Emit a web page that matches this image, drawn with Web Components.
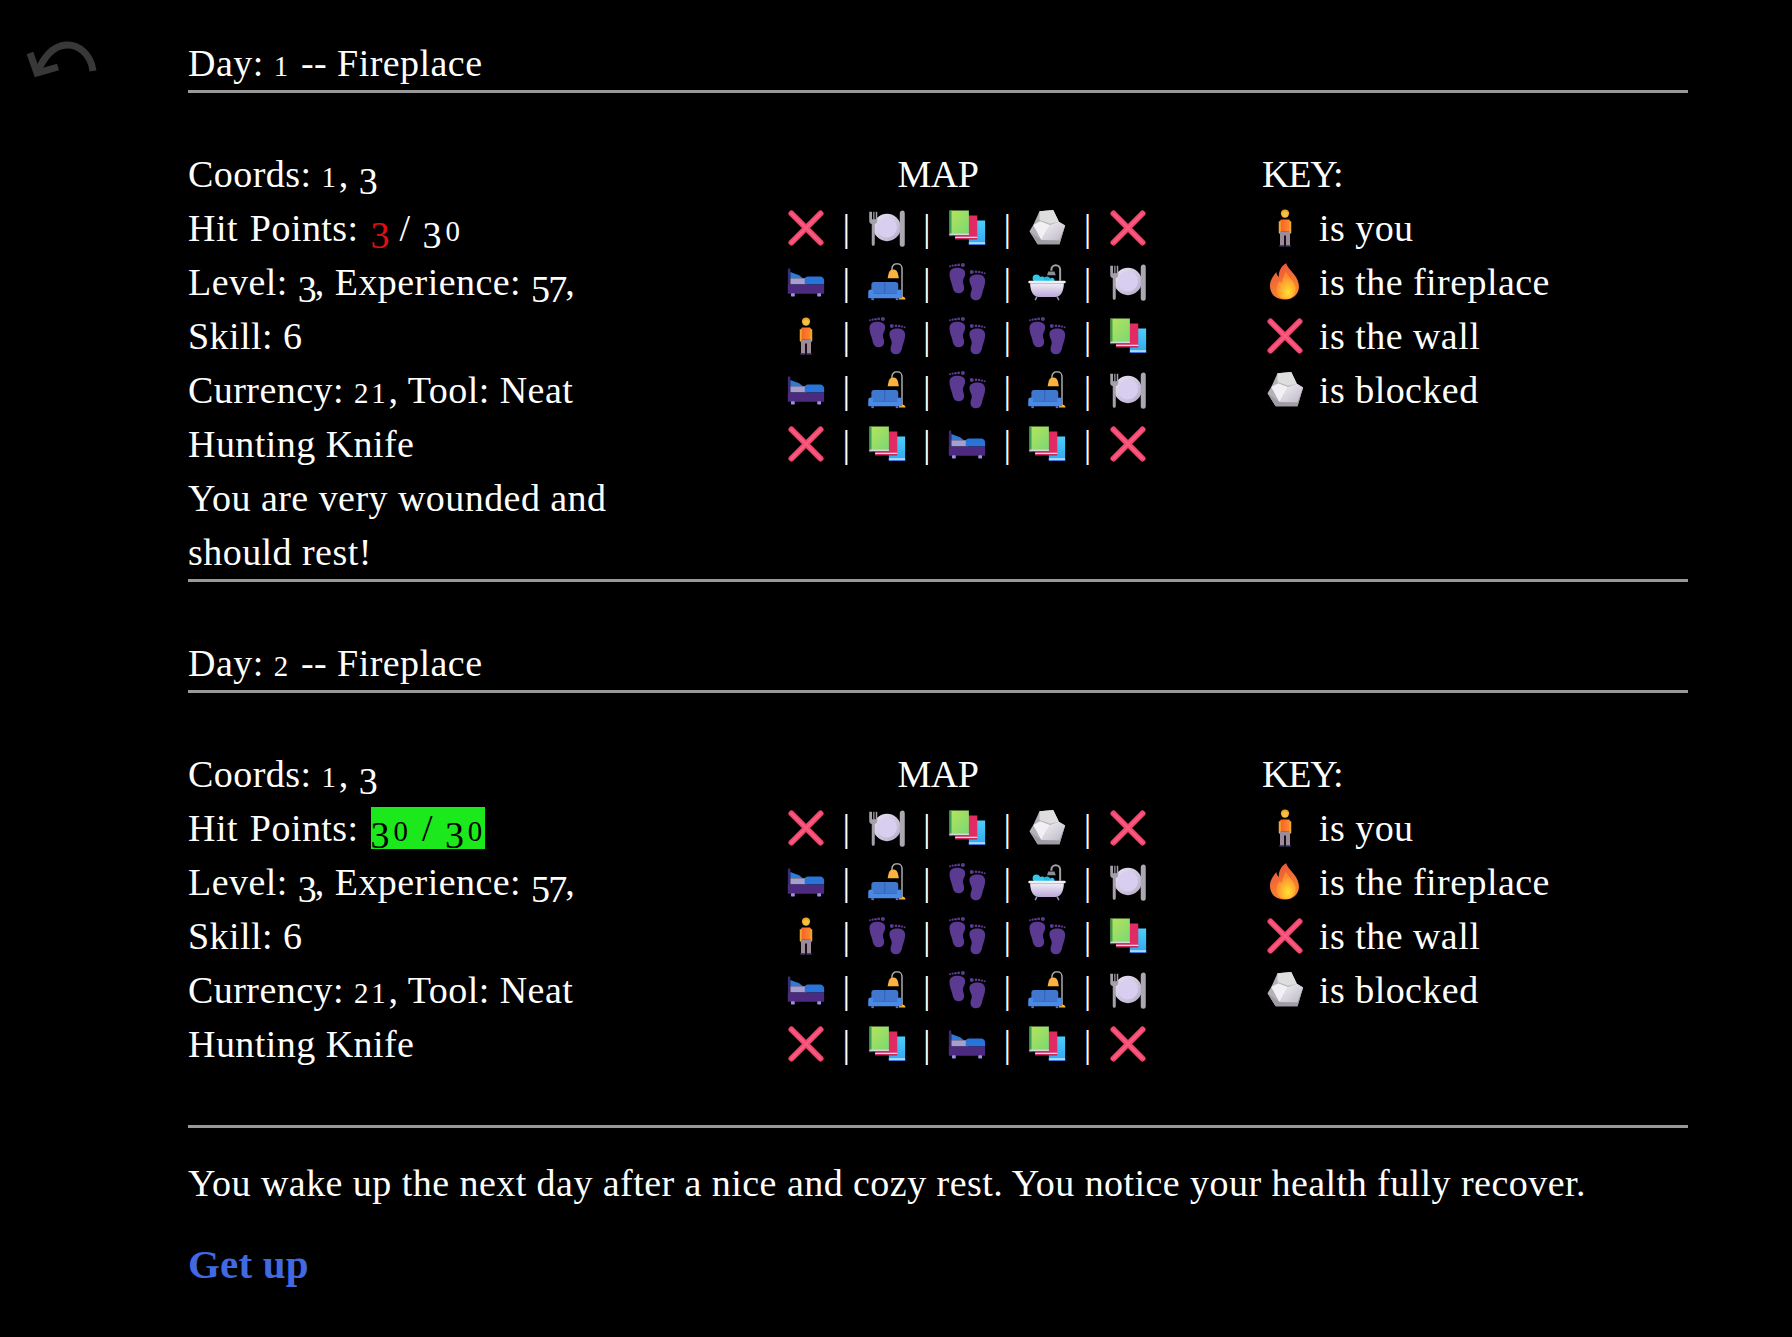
<!DOCTYPE html>
<html><head><meta charset="utf-8"><title>Day</title>
<style>
html,body{margin:0;background:#000;color:#fff;font-family:"Liberation Serif",serif}
</style></head><body>
<game-page></game-page>
<script>
const foot=`<path d="M2 9.500c0-3.500 2.700-5 6.500-5s6.500 1.700 6 5.300c-.3 2.500-2 4-1.800 6.200.1 1.500 1 2.800 1 4.800 0 2.700-2 4.200-4.500 4.200-3.200 0-4.500-2.700-5-6.200C3.300 15.800 2 13 2 9.500z"/><circle cx="2.400" cy="3.400" r=".8"/><circle cx="4.500" cy="2.900" r=".9"/><circle cx="6.800" cy="2.500" r="1"/><circle cx="9.300" cy="2.300" r="1.100"/><circle cx="12.700" cy="2.400" r="1.600"/>`;
const G={
x:`<path d="M4.400 4.400L27.600 27.600M27.600 4.400L4.400 27.600" stroke="#f4476f" stroke-width="4.800" stroke-linecap="round"/><path d="M4.400 4.400L27.600 27.600M27.600 4.400L4.400 27.600" stroke="#ff6a8c" stroke-width="1.600" stroke-linecap="round" opacity=".6"/>`,
plate:`<defs><linearGradient id="p" x1="0" y1="0" x2="1" y2="1"><stop offset="0" stop-color="#ebe5f6"/><stop offset="1" stop-color="#b5aac8"/></linearGradient></defs><circle cx="16" cy="15.500" r="11" fill="url(#p)"/><circle cx="16" cy="15.500" r="8" fill="#d8cef0"/><path d="M1.800 3v7.500c0 1.200.9 2 2 2.300V29a1.200 1.200 0 002.400 0V12.800c1.100-.3 2-1.100 2-2.300V3H7v6H6V3H5v6H4V3z" fill="#a5a1aa"/><path d="M26.200 29V4.500C26.200 3 27.200 2 28.400 2s1.800 1 1.800 2.500V29a2 2 0 01-4 0z" fill="#aca8b2"/>`,
books:`<defs><linearGradient id="g" x1="0" y1="0" x2="1" y2="1"><stop offset="0" stop-color="#b8e45c"/><stop offset="1" stop-color="#78d874"/></linearGradient><linearGradient id="b" x1="0" y1="0" x2="0" y2="1"><stop offset="0" stop-color="#4dcffa"/><stop offset="1" stop-color="#31a7f0"/></linearGradient></defs><path d="M20 10h10.500v19.500H17.500V25z" fill="url(#b)"/><rect x="17.500" y="27.500" width="13" height="1.200" fill="#d7ecfb"/><rect x="17.500" y="28.700" width="13" height=".9" fill="#3a78d6"/><path d="M6.500 6h17.700v19H6.500z" fill="#e32b63"/><rect x="6.500" y="23" width="17.700" height="1.200" fill="#e9dbe5"/><rect x="6.500" y="24.200" width="17.700" height=".9" fill="#b0244f"/><path d="M2 2h15.500v19.500H2z" fill="url(#g)"/><rect x="2" y="2" width="1.600" height="20.500" fill="#3e9a52"/><rect x="2" y="20.500" width="15.500" height="1.200" fill="#d8d9dc"/><rect x="2" y="21.700" width="15.500" height=".8" fill="#5a6a60"/>`,
rock:`<defs><linearGradient id="r" x1="0" y1="0" x2="1" y2="1"><stop offset="0" stop-color="#f6f4f8"/><stop offset="1" stop-color="#bcb6c4"/></linearGradient></defs><path d="M10 2.500l11-1 4.500 9.500 5 3L26 29H8.500L2 18.500l3-5z" fill="#b4b2b8"/><path d="M10 2.500l11-1 4.500 9.500-7 1.500-8.500-3z" fill="#dededf"/><path d="M5 13.500l5.500-3 8 3-7 12z" fill="#f2f0f5"/><path d="M18.500 13.500l7-2.500 5 3L26 26H11.500z" fill="url(#r)"/><path d="M2 18.500l9.500 7L26 26l4.500-12L26 29H8.500z" fill="#a09ca6"/>`,
bed:`<path d="M1.500 6.500c0-.8.4-1.500 1-1.500s1 .7 1 1.500V24h-2z" fill="#3b2a75"/><path d="M3.500 8l7 2.500 3 2.500h-10z" fill="#2e7bd6"/><rect x="3.500" y="13" width="13" height="5" fill="#a5a0d0"/><path d="M15 16v-2c0-1.500 1-2.500 2.500-2.500H27c2.300 0 3.500 1.300 3.500 3.500V18H15z" fill="#2874d9"/><path d="M1.500 18h29v7.300h-29z" fill="#4b2a7f"/><rect x="4" y="25" width="3" height="2.500" rx=".5" fill="#a08fe6"/><rect x="25" y="25" width="3" height="2.500" rx=".5" fill="#a08fe6"/>`,
sofa:`<path d="M28 28.500V5a3.500 3.500 0 00-3.500-3.500h-1A3.500 3.500 0 0020 5v1.500" fill="none" stroke="#b9b9bd" stroke-width="1.100"/><path d="M21 6c-2.200 0-3.500 1.500-3.800 3.500l-.7 3.500h9l-.7-3.500C24.500 7.500 23.200 6 21 6z" fill="#fcb23c"/><path d="M25.500 30c0-1.500 1-2.500 2.500-2.500s2.800 1 2.800 2.500z" fill="#f9b530"/><path d="M3.500 18c0-1.100.9-2 2-2H23c1.100 0 2 .9 2 2v7H3.500z" fill="#3f78ce"/><path d="M14.200 16v9" stroke="#2e5dad" stroke-width=".7"/><path d="M1 24a2 2 0 014 0v1h19v-1a2 2 0 014 0v5H1z" fill="#4a8ae6"/><rect x="3.500" y="29" width="2" height="1.500" fill="#6a70d0"/><rect x="23" y="29" width="2" height="1.500" fill="#6a70d0"/>`,
feet:`<g fill="#5b3a91">${foot}<g transform="translate(32.500 5.500) scale(-1 1)">${foot}</g></g>`,
bath:`<defs><linearGradient id="t" x1="0" y1="0" x2="0" y2="1"><stop offset="0" stop-color="#f2eef8"/><stop offset="1" stop-color="#b9a8d6"/></linearGradient></defs><path d="M26.500 15V6a3.500 3.500 0 00-7 0v1" fill="none" stroke="#a0a0a4" stroke-width="1.600"/><path d="M16 10.500h7l-1-3h-5z" fill="#8e8e92"/><circle cx="7.500" cy="13" r="3" fill="#2ec8ea"/><circle cx="12" cy="14" r="2.500" fill="#2ec8ea"/><circle cx="16" cy="14" r="2.500" fill="#22b8e0"/><circle cx="20" cy="14.500" r="2" fill="#2ec8ea"/><rect x="1" y="15" width="30" height="2" rx="1" fill="#f3eff6"/><path d="M2.500 17h27c0 6-2.500 11-7 11h-13c-4.500 0-7-5-7-11z" fill="url(#t)"/><path d="M8 27.500l-1.500 3M24 27.500l1.500 3" stroke="#9a90a8" stroke-width="1.200"/>`,
person:`<defs><linearGradient id="s" x1="0" y1="0" x2="1" y2="0"><stop offset="0" stop-color="#f95f2a"/><stop offset="1" stop-color="#ff8a2c"/></linearGradient></defs><circle cx="16" cy="4.400" r="3.300" fill="#eaa72a"/><circle cx="16" cy="5" r="2.300" fill="#f6c142"/><path d="M12 10.500c0-.8.6-1.300 1.300-1.300h5.400c.7 0 1.300.5 1.300 1.300v8.500h-8z" fill="url(#s)"/><path d="M11 10.500h1.600v9.500c0 .7-1.600.7-1.600 0zM19.400 10.500H21V20c0 .7-1.600.7-1.600 0z" fill="#e9a92c"/><path d="M12 19h8v11h-3.300v-8h-1.400v8H12z" fill="#9d8a9b"/><rect x="11.500" y="29.700" width="4" height="1.200" fill="#4a3f7a"/><rect x="16.500" y="29.700" width="4" height="1.200" fill="#4a3f7a"/>`,
fire:`<defs><linearGradient id="f" x1=".2" y1="0" x2=".6" y2="1"><stop offset="0" stop-color="#e7543b"/><stop offset="1" stop-color="#ff8a2c"/></linearGradient><radialGradient id="f2" cx=".6" cy=".75" r=".6"><stop offset="0" stop-color="#ffe135"/><stop offset="1" stop-color="#ff8a2c"/></radialGradient></defs><path d="M17 1c1 5 9 9 10 17 1 7-4 12-11 12S4 26 4 19c0-5 3-8 5-11 .5 2 1 3 2 4 0-5 2-9 6-11z" fill="url(#f)"/><path d="M17 8c1 4 7 7 7.500 12.500C25 26 21 29.500 16.500 29.500S9 26 9 21.500c0-3 1.500-4.500 3-6.500.5 1 1 1.500 1.500 2 .3-3 1.500-6.500 3.500-9z" fill="url(#f2)"/>`
};
class EmojiIcon extends HTMLElement{connectedCallback(){const r=this.attachShadow({mode:"open"});const n=this.getAttribute("name");
r.innerHTML=`<style>:host{display:inline-flex;width:40px;height:40px;align-items:center;justify-content:center}svg{width:40px;height:40px;display:block;overflow:visible}</style><svg viewBox="0 0 32 32" role="img" aria-label="${n}">${G[n]}</svg>`}}
customElements.define("emoji-icon",EmojiIcon);
class OldNum extends HTMLElement{connectedCallback(){const r=this.attachShadow({mode:"open"});
const t=this.textContent;const h=t.replace(/\d/g,(d,i,s)=>d==="0"?`<span class="x z">${d}</span>`:/[12]/.test(d)?`<span class="x">${d}</span>`:/[34579]/.test(d)?`<span class="d${s[i+1]==="0"?" w":""}">${d}</span>`:d);
r.innerHTML=`<style>:host{display:inline}.x{font-size:.76em;letter-spacing:.1em;line-height:0}.z{letter-spacing:.08em}.d{vertical-align:-.18em;line-height:0;letter-spacing:-.05em}.w{letter-spacing:.1em}</style>${h}`}}
customElements.define("old-num",OldNum);
const L={X:"x",P:"plate",B:"books",R:"rock",D:"bed",S:"sofa",F:"feet",T:"bath",Y:"person"};
class MapGrid extends HTMLElement{connectedCallback(){const r=this.attachShadow({mode:"open"});
const rows=this.getAttribute("rows").split(",");
r.innerHTML=`<style>:host{display:block}.t{text-align:center;height:54px;line-height:54px;letter-spacing:-.5px}.g{display:grid;grid-template-columns:repeat(4,40px 40.4px) 40px;justify-content:center;grid-auto-rows:54px;align-items:center;justify-items:center;margin-left:58px}.s{font-size:38px;line-height:54px;letter-spacing:0}</style><div class="t">MAP</div><div class="g">${rows.map(c=>[...c].map((k,i)=>(i?'<span class="s">|</span>':'')+`<emoji-icon name="${L[k]}"></emoji-icon>`).join("")).join("")}</div>`}}
customElements.define("map-grid",MapGrid);
class KeyList extends HTMLElement{connectedCallback(){const r=this.attachShadow({mode:"open"});
const it=[["person","is you"],["fire","is the fireplace"],["x","is the wall"],["rock","is blocked"]];
r.innerHTML=`<style>:host{display:block;padding-left:74px}.r{display:flex;align-items:center;height:54px;gap:14px;padding-left:3px}.k{height:54px;line-height:54px;letter-spacing:-1.2px}</style><div class="k">KEY:</div>${it.map(([i,t])=>`<div class="r"><emoji-icon name="${i}"></emoji-icon><span>${t}</span></div>`).join("")}`}}
customElements.define("key-list",KeyList);
class DayPanel extends HTMLElement{connectedCallback(){const r=this.attachShadow({mode:"open"});
r.innerHTML=`<style>:host{display:block}
h2{font:inherit;margin:0;height:54px;line-height:54px}
hr{border:0;height:3px;background:#999;margin:0}
.grid{display:grid;grid-template-columns:repeat(3,500px);margin-top:54px;min-height:378px}
.l{line-height:54px;max-width:440px}
</style><h2><old-num>Day: ${this.getAttribute("day")}</old-num> -- Fireplace</h2><hr>
<div class="grid"><div class="l"><slot></slot></div><map-grid rows="XPBRX,DSFTP,YFFFB,DSFSP,XBDBX"></map-grid><key-list></key-list></div><hr>`}}
customElements.define("day-panel",DayPanel);
class GamePage extends HTMLElement{connectedCallback(){const r=this.attachShadow({mode:"open"});
r.innerHTML=`<style>:host{display:block;box-sizing:border-box;height:1337px;background:#000;color:#fff;font:38px/54px "Liberation Serif",serif;letter-spacing:.45px;position:relative;padding:36px 104px 0 188px}
.back{position:absolute;left:26px;top:36px;width:72px;height:48px}
day-panel+day-panel{margin-top:54px}
.m{margin:0;padding-top:28px;height:54px}
a{display:block;margin-top:27px;color:#4169e1;font-weight:700;font-size:41px;letter-spacing:.2px;text-decoration:none}
.hit{word-spacing:2px}.hp{color:#e01010}.ok{background:#1be91b;color:#000}
</style>
<svg class="back" viewBox="0 0 72 48" fill="none" stroke="#383838" stroke-width="7"><path d="M67 35C65 18 52 8 40 9 28 10 18 20 11 37"/><path d="M4 17l7 20 21-6"/></svg>
<day-panel day="1"><old-num>Coords: 1, 3</old-num><br><span class="hit"><old-num>Hit Points: </old-num><span class="hp"><old-num>3</old-num></span><old-num> / 30</old-num></span><br><old-num>Level: 3, Experience: 57,</old-num><br><old-num>Skill: 6</old-num><br><old-num>Currency: 21, Tool: Neat</old-num><br>Hunting Knife<br>You are very wounded and should rest!</day-panel>
<day-panel day="2"><old-num>Coords: 1, 3</old-num><br><span class="hit"><old-num>Hit Points: </old-num><span class="ok"><old-num>30 / 30</old-num></span></span><br><old-num>Level: 3, Experience: 57,</old-num><br><old-num>Skill: 6</old-num><br><old-num>Currency: 21, Tool: Neat</old-num><br>Hunting Knife</day-panel>
<p class="m">You wake up the next day after a nice and cozy rest. You notice your health fully recover.</p>
<a href="#">Get up</a>`}}
customElements.define("game-page",GamePage);
</script>
</body></html>
